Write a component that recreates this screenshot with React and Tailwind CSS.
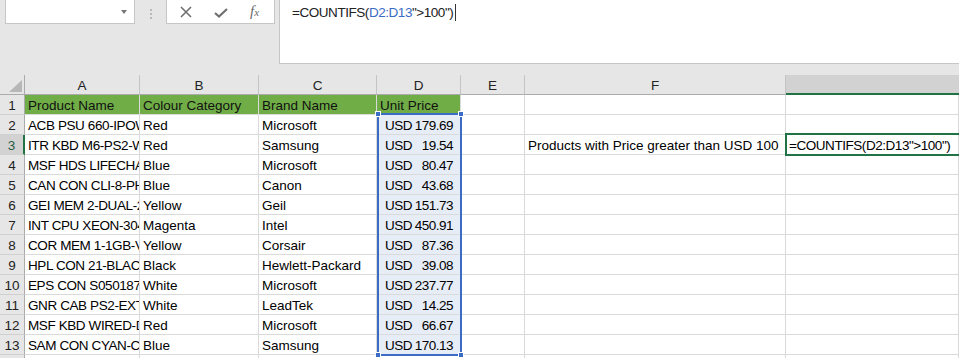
const font = { fontFamily: '"Liberation Sans", Arial, sans-serif' };

const columns = ["A", "B", "C", "D", "E", "F", "G"];

const rows = [
  ["ACB PSU 660-IPOWER-BLK", "Red", "Microsoft", "179.69"],
  ["ITR KBD M6-PS2-WHT", "Red", "Samsung", "19.54"],
  ["MSF HDS LIFECHAT-LX3000", "Blue", "Microsoft", "80.47"],
  ["CAN CON CLI-8-PHOTO", "Blue", "Canon", "43.68"],
  ["GEI MEM 2-DUAL-2GB", "Yellow", "Geil", "151.73"],
  ["INT CPU XEON-3040", "Magenta", "Intel", "450.91"],
  ["COR MEM 1-1GB-VALUE", "Yellow", "Corsair", "87.36"],
  ["HPL CON 21-BLACK-INK", "Black", "Hewlett-Packard", "39.08"],
  ["EPS CON S050187", "White", "Microsoft", "237.77"],
  ["GNR CAB PS2-EXT-1.8M", "White", "LeadTek", "14.25"],
  ["MSF KBD WIRED-DESKTOP", "Red", "Microsoft", "66.67"],
  ["SAM CON CYAN-CLP300", "Blue", "Samsung", "170.13"],
];

const base =
  "h-[20px] border-r border-b border-[#dadada] overflow-hidden whitespace-nowrap pt-[1px] leading-[19px]";
const cell = `${base} pl-[3px]`;

function FormulaBar() {
  return (
    <div className="flex h-[75px] bg-[#e6e6e6]">
      <div className="flex w-[279px] items-start">
        <div className="ml-[5px] flex h-[24px] w-[130px] items-center justify-end border border-t-0 border-[#c6c6c6] bg-white pr-[7px]">
          <div className="h-0 w-0 border-x-[3px] border-t-[4px] border-x-transparent border-t-[#777]" />
        </div>
        <div className="flex w-[31px] flex-col items-center gap-[2px] pt-[9px]">
          <div className="h-[2px] w-[2px] bg-[#b9b9b9]" />
          <div className="h-[2px] w-[2px] bg-[#b9b9b9]" />
          <div className="h-[2px] w-[2px] bg-[#b9b9b9]" />
        </div>
        <div className="flex h-[24px] w-[109px] items-center border border-t-0 border-[#c6c6c6] bg-white">
          <svg width="12" height="12" viewBox="0 0 12 12" className="ml-[13px]">
            <path d="M1 1 L11 11 M11 1 L1 11" stroke="#707070" strokeWidth="1.6" />
          </svg>
          <svg width="14" height="10" viewBox="0 0 14 10" className="ml-[22px] mt-[3px]">
            <path d="M1 5 L5 8.5 L13 1" stroke="#707070" strokeWidth="2.2" fill="none" />
          </svg>
          <span
            className="ml-[22px] text-[15px] italic text-[#6a6a6a]"
            style={{ fontFamily: '"Liberation Serif", serif' }}
          >
            f<span className="text-[11px]">x</span>
          </span>
        </div>
      </div>
      <div
        className="flex h-[64px] flex-1 items-start border-b border-l border-[#c6c6c6] bg-white pl-[12px] pt-[3px] text-[13.5px] leading-[19px] tracking-[-0.45px] text-[#222]"
        style={font}
      >
        <span>=COUNTIFS(</span>
        <span className="text-[#3b6cc5]">D2:D13</span>
        <span>"&gt;100")</span>
        <span className="ml-[2px] mt-[1px] h-[17px] w-px bg-[#333]" />
      </div>
    </div>
  );
}

function HeaderRow() {
  return (
    <>
      <div className="flex h-[20px] items-end justify-end border-r border-b border-[#ababab] bg-[#e6e6e6] pb-[2px] pr-[2px]">
        <svg width="13" height="12" viewBox="0 0 13 12">
          <polygon points="13,0 13,12 0,12" fill="#b7b7b7" />
        </svg>
      </div>
      {columns.map((c) => (
        <div
          key={c}
          className={
            c === "G"
              ? "h-[20px] border-b-2 border-[#217346] bg-[#d2d2d2]"
              : "h-[20px] border-r border-b border-r-[#c4c4c4] border-b-[#ababab] bg-[#e6e6e6] pt-[1px] text-center leading-[19px] text-[#222]"
          }
        >
          {c === "G" ? "" : c}
        </div>
      ))}
    </>
  );
}

function RowHeader({ n }) {
  const active = n === 3;
  return (
    <div
      className={
        active
          ? "h-[20px] border-r-2 border-b border-r-[#217346] border-b-[#d0d0d0] bg-[#d2d2d2] pt-[1px] text-center leading-[19px] text-[#2e5c44]"
          : "h-[20px] border-r border-b border-r-[#ababab] border-b-[#d0d0d0] bg-[#e6e6e6] pt-[1px] text-center leading-[19px] text-[#222]"
      }
    >
      {n}
    </div>
  );
}

export default function App() {
  return (
    <div className="h-[358px] w-[959px] overflow-hidden bg-white text-[13.5px] text-black" style={font}>
      <FormulaBar />
      <div className="relative grid grid-cols-[25px_115px_119px_118px_84px_64px_261px_173px]">
        <HeaderRow />

        <RowHeader n={1} />
        <div className={`${cell} border-[#70ad47] bg-[#70ad47] text-[#111]`}>Product Name</div>
        <div className={`${cell} border-[#70ad47] bg-[#70ad47] text-[#111]`}>Colour Category</div>
        <div className={`${cell} border-[#70ad47] bg-[#70ad47] text-[#111]`}>Brand Name</div>
        <div className={`${cell} border-[#70ad47] bg-[#70ad47] text-[#111]`}>Unit Price</div>
        <div className={cell} />
        <div className={cell} />
        <div className={cell} />

        {rows.map((r, i) => {
          const n = i + 2;
          return [
            <RowHeader key={`h${n}`} n={n} />,
            <div key={`a${n}`} className={`${cell} tracking-[-0.4px]`}>{r[0]}</div>,
            <div key={`b${n}`} className={cell}>{r[1]}</div>,
            <div key={`c${n}`} className={cell}>{r[2]}</div>,
            <div
              key={`d${n}`}
              className={`${base} flex justify-between bg-[#e7edf7] pl-[8px] pr-[7px] tracking-[-0.5px]`}
            >
              <span>USD</span>
              <span>{r[3]}</span>
            </div>,
            <div key={`e${n}`} className={cell} />,
            <div key={`f${n}`} className={cell}>
              {n === 3 ? "Products with Price greater than USD 100" : ""}
            </div>,
            <div key={`g${n}`} className={`${cell} tracking-[-0.45px]`}>
              {n === 3 ? '=COUNTIFS(D2:D13">100")' : ""}
            </div>,
          ];
        })}

        <RowHeader n={14} />
        {columns.map((c) => (
          <div key={`r14${c}`} className={cell} />
        ))}

        {/* selection D2:D13 */}
        <div className="pointer-events-none absolute left-[377px] top-[38px] h-[243px] w-[85px] border-2 border-[#3b6cc5]">
          <div className="absolute -left-[4px] -top-[4px] h-[6px] w-[6px] border border-white bg-[#3b6cc5]" />
          <div className="absolute -right-[4px] -top-[4px] h-[6px] w-[6px] border border-white bg-[#3b6cc5]" />
          <div className="absolute -bottom-[4px] -left-[4px] h-[6px] w-[6px] border border-white bg-[#3b6cc5]" />
          <div className="absolute -bottom-[4px] -right-[4px] h-[6px] w-[6px] border border-white bg-[#3b6cc5]" />
        </div>

        {/* active cell G3 */}
        <div className="pointer-events-none absolute left-[785px] top-[58px] h-[23px] w-[176px] border-2 border-[#217346]" />
      </div>
    </div>
  );
}
